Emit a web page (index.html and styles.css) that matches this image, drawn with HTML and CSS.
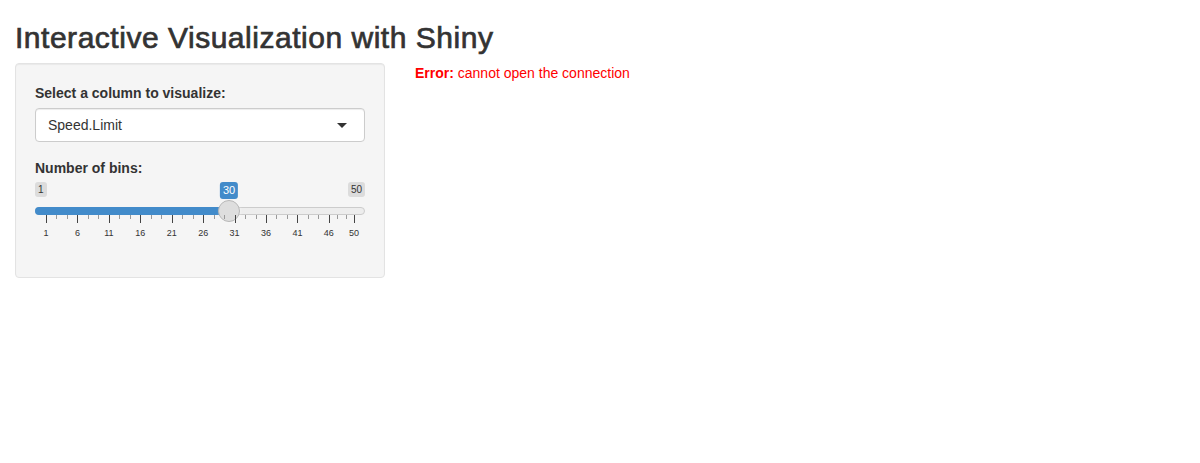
FILE: index.html
```html
<!DOCTYPE html>
<html>
<head>
<meta charset="utf-8">
<link rel="stylesheet" href="styles.css">
</head>
<body>
<div class="container">
  <h2 class="title">Interactive Visualization with Shiny</h2>
  <div class="row">
    <div class="sidebar">
      <form class="well">
        <div class="form-group">
          <label class="control-label">Select a column to visualize:</label>
          <div class="select">
            <span class="select-value">Speed.Limit</span>
            <span class="caret"></span>
          </div>
        </div>
        <div class="form-group">
          <label class="control-label">Number of bins:</label>
          <div class="irs">
            <span class="irs-min">1</span>
            <span class="irs-max">50</span>
            <div class="irs-line"></div>
            <div class="irs-bar" style="width: 194px"></div>
            <span class="irs-single" style="left: 194px">30</span>
            <span class="irs-handle" style="left: 194px"></span>
            <div class="irs-grid">
              <span class="pol" style="left:0%"></span>
              <span class="pol small" style="left:3.402%"></span>
              <span class="pol small" style="left:6.803%"></span>
              <span class="pol" style="left:10.204%"></span>
              <span class="pol small" style="left:13.605%"></span>
              <span class="pol small" style="left:17.007%"></span>
              <span class="pol" style="left:20.408%"></span>
              <span class="pol small" style="left:23.81%"></span>
              <span class="pol small" style="left:27.211%"></span>
              <span class="pol" style="left:30.612%"></span>
              <span class="pol small" style="left:34.014%"></span>
              <span class="pol small" style="left:37.415%"></span>
              <span class="pol" style="left:40.816%"></span>
              <span class="pol small" style="left:44.218%"></span>
              <span class="pol small" style="left:47.619%"></span>
              <span class="pol" style="left:51.02%"></span>
              <span class="pol small" style="left:54.422%"></span>
              <span class="pol small" style="left:57.823%"></span>
              <span class="pol" style="left:61.224%"></span>
              <span class="pol small" style="left:64.626%"></span>
              <span class="pol small" style="left:68.027%"></span>
              <span class="pol" style="left:71.429%"></span>
              <span class="pol small" style="left:74.83%"></span>
              <span class="pol small" style="left:78.231%"></span>
              <span class="pol" style="left:81.633%"></span>
              <span class="pol small" style="left:85.034%"></span>
              <span class="pol small" style="left:88.435%"></span>
              <span class="pol" style="left:91.837%"></span>
              <span class="pol small" style="left:94.558%"></span>
              <span class="pol small" style="left:97.279%"></span>
              <span class="pol" style="left:100%"></span>
              <span class="txt" style="left:0%">1</span>
              <span class="txt" style="left:10.204%">6</span>
              <span class="txt" style="left:20.408%">11</span>
              <span class="txt" style="left:30.612%">16</span>
              <span class="txt" style="left:40.816%">21</span>
              <span class="txt" style="left:51.02%">26</span>
              <span class="txt" style="left:61.224%">31</span>
              <span class="txt" style="left:71.429%">36</span>
              <span class="txt" style="left:81.633%">41</span>
              <span class="txt" style="left:91.837%">46</span>
              <span class="txt" style="left:100%">50</span>
            </div>
          </div>
        </div>
      </form>
    </div>
    <div class="main">
      <div class="shiny-output-error"><strong>Error:</strong> cannot open the connection</div>
    </div>
  </div>
</div>
</body>
</html>
```

FILE: styles.css
```css
* { box-sizing: border-box; }
html, body { margin: 0; padding: 0; background: #fff; }
body {
  font-family: "Liberation Sans", Arial, sans-serif;
  font-size: 14px;
  line-height: 1.42857;
  color: #333;
}
.container { padding: 0 15px; }
.title {
  font-size: 30px;
  font-weight: 400;
  line-height: 1.1;
  margin: 20px 0 10px;
  color: #333;
  letter-spacing: 0.52px;
  -webkit-text-stroke: 0.7px #333;
  padding-top: 1px;
  height: 33px;
}
.row { display: flex; margin: 0 -15px; }
.sidebar { width: 400px; padding: 0 15px; }
.main { flex: 1; padding: 0 15px; }
.well {
  display: block;
  margin: 0 0 20px;
  padding: 19px;
  background: #f5f5f5;
  border: 1px solid #e3e3e3;
  border-radius: 4px;
  box-shadow: inset 0 1px 1px rgba(0,0,0,.05);
}
.form-group { margin-bottom: 15px; }
.control-label {
  display: inline-block;
  font-weight: bold;
  padding-top: 1px;
  margin-bottom: 4px;
}
.form-group + .form-group .control-label { padding-top: 2px; margin-bottom: 3px; }
.select {
  position: relative;
  display: flex;
  align-items: center;
  height: 34px;
  padding: 7px 12px 5px;
  background: #fff;
  border: 1px solid #ccc;
  border-radius: 4px;
  box-shadow: inset 0 1px 1px rgba(0,0,0,.075);
}
.caret {
  position: absolute;
  right: 17px;
  top: 14px;
  width: 0; height: 0;
  border-style: solid;
  border-width: 5px 5px 0 5px;
  border-color: #333 transparent transparent transparent;
}
.irs {
  position: relative;
  height: 61px;
  font-family: "Liberation Sans", Arial, sans-serif;
}
.irs-min, .irs-max, .irs-single {
  position: absolute;
  top: 0;
  font-size: 10px;
  line-height: 1.333;
  padding: 1px 3px;
  border-radius: 3px;
}
.irs-min, .irs-max { background: rgba(0,0,0,.1); color: #333; }
.irs-min { left: 0; }
.irs-max { right: 0; }
.irs-single {
  background: #428bca;
  color: #fff;
  font-size: 11px;
  transform: translateX(-50%);
}
.irs-line {
  position: absolute;
  left: 0; right: 0;
  top: 25px;
  height: 8px;
  background: #ededed;
  border: 1px solid #cccccc;
  border-radius: 8px;
}
.irs-bar {
  position: absolute;
  left: 0;
  top: 25px;
  height: 8px;
  background: #428bca;
  border-radius: 8px 0 0 8px;
}
.irs-handle {
  position: absolute;
  top: 18px;
  width: 22px; height: 22px;
  margin-left: -11px;
  border-radius: 50%;
  background: #dedede;
  border: 1px solid #b8b8b8;
  box-shadow: 1px 1px 3px rgba(255,255,255,.3);
}
.irs-grid {
  position: absolute;
  left: 11px; right: 11px;
  top: 33px;
  height: 27px;
}
.pol {
  position: absolute;
  top: 0;
  width: 1px;
  height: 8px;
  background: #444;
}
.pol.small { height: 4px; background: #999; }
.txt {
  position: absolute;
  top: 14px;
  font-size: 9px;
  line-height: 1;
  color: #333;
  transform: translateX(-50%);
  white-space: nowrap;
}
.shiny-output-error { color: red; padding-top: 1px; }
.shiny-output-error strong { font-weight: bold; }
```
